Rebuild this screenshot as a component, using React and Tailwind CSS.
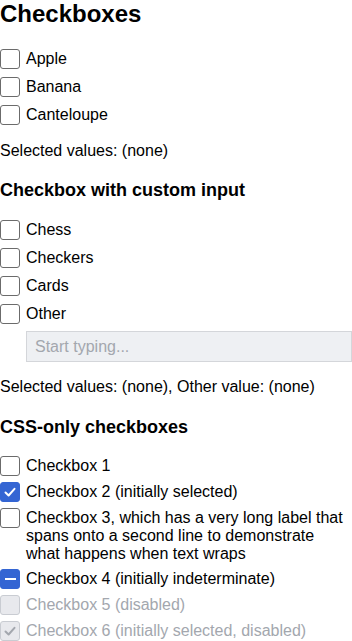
import React from "react";

function Box({ state = "off", disabled = false }) {
  const base = "w-5 h-5 shrink-0 rounded-[3px] border flex items-center justify-center";
  let cls;
  if (disabled) cls = "bg-[#e8e9ed] border-[#c9ccd2]";
  else if (state === "on" || state === "ind") cls = "bg-[#3465d3] border-[#3465d3]";
  else cls = "bg-white border-[#6b6b6b]";
  const stroke = disabled ? "#a3a7ae" : "#ffffff";
  return (
    <span className={`${base} ${cls}`}>
      {state === "on" && (
        <svg width="14" height="14" viewBox="0 0 14 14" fill="none">
          <path d="M2.5 7.5 L5.6 10.5 L11.5 3.8" stroke={stroke} strokeWidth="2" strokeLinecap="round" strokeLinejoin="round" />
        </svg>
      )}
      {state === "ind" && <span className="block w-[11px] h-[2px] bg-white" />}
    </span>
  );
}

function Row({ label, state, disabled }) {
  return (
    <label className="flex items-start gap-[6px]">
      <Box state={state} disabled={disabled} />
      <span className={`pt-px leading-[18px] text-[16px] ${disabled ? "text-[#a3a7ae]" : "text-black"}`}>{label}</span>
    </label>
  );
}

export default function App() {
  return (
    <div className="w-[352px] bg-white text-black flex flex-col" style={{ fontFamily: '"Liberation Sans", Arial, sans-serif' }}>
      <h1 className="text-[24px] font-bold leading-[28px]">Checkboxes</h1>
      <div className="mt-[21px] flex flex-col gap-2">
        <Row label="Apple" />
        <Row label="Banana" />
        <Row label="Canteloupe" />
      </div>
      <p className="mt-[17px] text-[16px] leading-[18px]">Selected values: (none)</p>

      <h2 className="mt-[19px] text-[18px] font-bold leading-[22px]">Checkbox with custom input</h2>
      <div className="mt-[19px] flex flex-col gap-2">
        <Row label="Chess" />
        <Row label="Checkers" />
        <Row label="Cards" />
        <Row label="Other" />
      </div>
      <div className="mt-[7px] ml-[26px] h-[31px] border border-[#d4d6da] bg-[#eef0f3] flex items-center px-2 text-[16px] text-[#a3a7ae]">
        Start typing...
      </div>
      <p className="mt-[16px] text-[16px] leading-[18px]">Selected values: (none), Other value: (none)</p>

      <h2 className="mt-[20px] text-[18px] font-bold leading-[22px]">CSS-only checkboxes</h2>
      <div className="mt-[18px] flex flex-col gap-[6px]">
        <Row label="Checkbox 1" />
        <Row label="Checkbox 2 (initially selected)" state="on" />
        <Row label="Checkbox 3, which has a very long label that spans onto a second line to demonstrate what happens when text wraps" />
        <Row label="Checkbox 4 (initially indeterminate)" state="ind" />
        <Row label="Checkbox 5 (disabled)" disabled />
        <Row label="Checkbox 6 (initially selected, disabled)" state="on" disabled />
      </div>
    </div>
  );
}
